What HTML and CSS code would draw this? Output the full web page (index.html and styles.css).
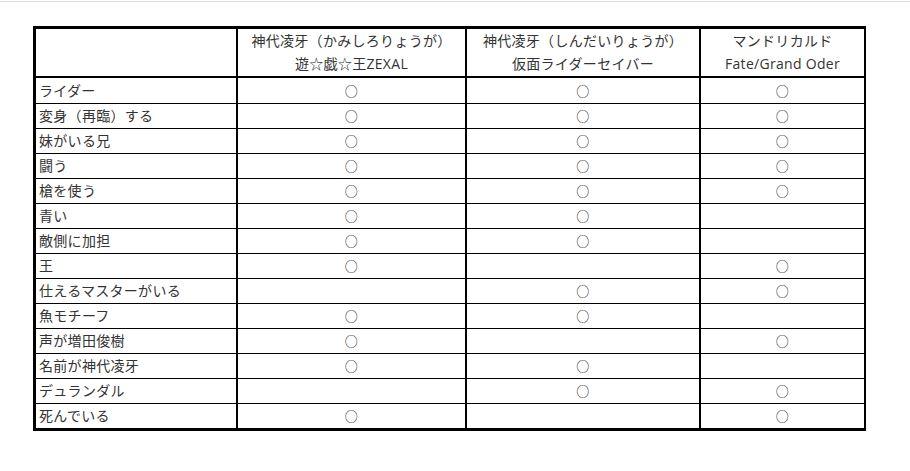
FILE: index.html
```html
<!DOCTYPE html>
<html lang="ja">
<head>
<meta charset="utf-8">
<title>神代凌牙比較表</title>
<link rel="stylesheet" href="styles.css">
</head>
<body>
<div class="topline"></div>
<table class="cmp">
  <thead>
    <tr>
      <th class="c1"></th>
      <th class="c2">神代凌牙（かみしろりょうが）<br>遊☆戯☆王ZEXAL</th>
      <th class="c3">神代凌牙（しんだいりょうが）<br>仮面ライダーセイバー</th>
      <th class="c4">マンドリカルド<br>Fate/Grand Oder</th>
    </tr>
  </thead>
  <tbody>
    <tr><td>ライダー</td><td class="m">○</td><td class="m">○</td><td class="m">○</td></tr>
    <tr><td>変身（再臨）する</td><td class="m">○</td><td class="m">○</td><td class="m">○</td></tr>
    <tr><td>妹がいる兄</td><td class="m">○</td><td class="m">○</td><td class="m">○</td></tr>
    <tr><td>闘う</td><td class="m">○</td><td class="m">○</td><td class="m">○</td></tr>
    <tr><td>槍を使う</td><td class="m">○</td><td class="m">○</td><td class="m">○</td></tr>
    <tr><td>青い</td><td class="m">○</td><td class="m">○</td><td class="m"></td></tr>
    <tr><td>敵側に加担</td><td class="m">○</td><td class="m">○</td><td class="m"></td></tr>
    <tr><td>王</td><td class="m">○</td><td class="m"></td><td class="m">○</td></tr>
    <tr><td>仕えるマスターがいる</td><td class="m"></td><td class="m">○</td><td class="m">○</td></tr>
    <tr><td>魚モチーフ</td><td class="m">○</td><td class="m">○</td><td class="m"></td></tr>
    <tr><td>声が増田俊樹</td><td class="m">○</td><td class="m"></td><td class="m">○</td></tr>
    <tr><td>名前が神代凌牙</td><td class="m">○</td><td class="m">○</td><td class="m"></td></tr>
    <tr><td>デュランダル</td><td class="m"></td><td class="m">○</td><td class="m">○</td></tr>
    <tr><td>死んでいる</td><td class="m">○</td><td class="m"></td><td class="m">○</td></tr>
  </tbody>
</table>
</body>
</html>
```

FILE: styles.css
```css
html, body {
  margin: 0;
  padding: 0;
  background: #fff;
}

body {
  font-family: "Open Sans", "Noto Sans CJK JP", sans-serif;
  font-size: 14px;
  color: #333;
}

.topline {
  height: 1px;
  margin-top: 1px;
  background: #dcdcdc;
}

.cmp {
  margin: 24px 0 0 33px;
  border-collapse: separate;
  border-spacing: 0;
  table-layout: fixed;
  width: 833px;
  border-top: 3px solid #000;
  border-left: 3px solid #000;
  border-bottom: 3px solid #000;
  border-right: 2px solid #000;
}

.cmp th,
.cmp td {
  box-sizing: border-box;
  padding: 0;
  font-weight: normal;
  letter-spacing: 0.3px;
}

.cmp th {
  height: 49px;
  border-bottom: 2px solid #000;
  text-align: center;
  vertical-align: middle;
  line-height: 23px;
  padding-bottom: 1px;
}

.cmp .c1 { width: 200px; }
.cmp .c2 { width: 229px; }
.cmp .c3 { width: 234px; }
.cmp .c4 { width: 165px; }

.cmp th + th,
.cmp td + td {
  border-left: 2px solid #000;
}

.cmp td {
  height: 25px;
  border-top: 1px solid #000;
  padding-left: 3px;
  vertical-align: middle;
  line-height: 20px;
  white-space: nowrap;
}

.cmp tbody tr:first-child td {
  border-top: none;
}

.cmp td.m {
  text-align: center;
  padding-left: 0;
  font-size: 13px;
  color: #222;
}
```
